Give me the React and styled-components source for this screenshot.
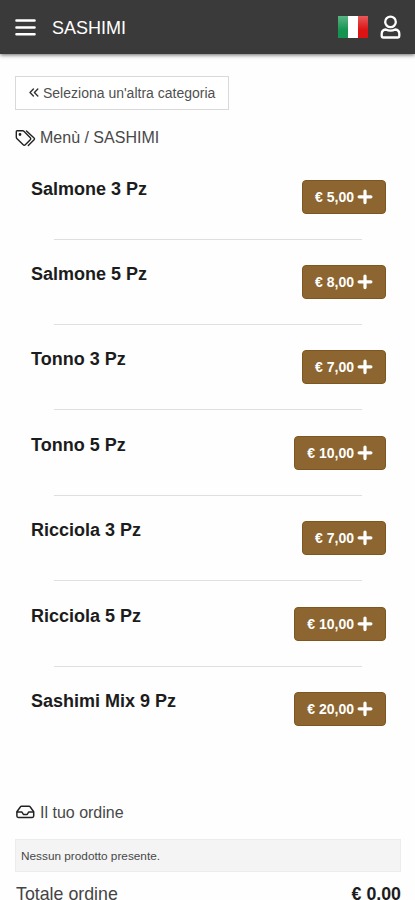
import React from "react";
import styled, { createGlobalStyle } from "styled-components";

const GlobalStyle = createGlobalStyle`
  * { box-sizing: border-box; }
  html, body { margin: 0; padding: 0; height: 100%; overflow: hidden; }
  body { background: #fefefe; color: #444; font-family: "Liberation Sans", Arial, sans-serif; }
`;

const Page = styled.div`
  height: 900px;
  overflow: hidden;
`;

const Header = styled.header`
  display: flex;
  align-items: center;
  height: 54px;
  padding: 0 14px 0 15px;
  background: #3a3a3a;
  color: #fff;
  box-shadow: 0 1px 4px rgba(0, 0, 0, 0.6);
`;

const HeaderTitle = styled.h1`
  flex: 1;
  margin: 2px 0 0 16px;
  font-size: 18px;
  line-height: 22px;
  font-weight: 400;
`;

const Flag = styled.div`
  width: 30px;
  height: 22px;
  margin-right: 12px;
  background:
    linear-gradient(to bottom, rgba(255, 255, 255, 0.3), rgba(255, 255, 255, 0) 65%),
    linear-gradient(to right, #149450 0 33.3%, #fff 33.3% 67%, #dd1212 67%);
`;

const Icon = styled.svg`
  display: block;
  flex: none;
  fill: none;
  stroke: currentColor;
  stroke-linejoin: round;
  stroke-linecap: round;
`;

const Main = styled.main`
  padding: 22px 14px 0 15px;
`;

const BackButton = styled.button`
  display: flex;
  align-items: center;
  gap: 4px;
  width: 214px;
  height: 34px;
  padding: 0 0 0 13px;
  border: 1px solid #d9d9d9;
  background: #fff;
  color: #505050;
  font: 14px/20px "Liberation Sans", Arial, sans-serif;
  white-space: nowrap;

  svg { color: #333; }
`;

const SectionTitle = styled.h2`
  display: flex;
  align-items: center;
  gap: 4px;
  height: 22px;
  margin: ${(p) => p.$top}px 0 0;
  font-size: 16px;
  font-weight: 400;
  color: #484848;

  svg { color: #222; }
`;

const Menu = styled.ul`
  list-style: none;
  margin: 30.6px 0 0;
  padding: 0 15px 0 16px;
`;

const Dish = styled.li`
  display: grid;
  grid-template-columns: 1fr auto;
  grid-template-rows: 59px 1px;
  height: 85.4px;
  align-items: start;
`;

const DishName = styled.h3`
  margin: -1px 0 0;
  font-size: 18px;
  line-height: 20px;
  font-weight: 700;
  color: #1c1c1c;
`;

const AddButton = styled.button`
  display: flex;
  align-items: center;
  gap: 3px;
  height: 34px;
  padding: 0 12px;
  border: 1px solid #7d571f;
  border-radius: 4px;
  background: #8c6530;
  color: #fff;
  font: 700 14px/20px "Liberation Sans", Arial, sans-serif;
`;

const Divider = styled.hr`
  grid-column: 1 / -1;
  width: 308px;
  height: 1px;
  margin: 0 0 0 23px;
  border: 0;
  background: #dfdfdf;
`;

const EmptyNotice = styled.p`
  height: 33px;
  margin: 15px 0 0;
  padding: 0 5px;
  border: 1px solid #ececec;
  background: #f4f4f4;
  color: #484848;
  font-size: 11.8px;
  line-height: 33px;
`;

const Total = styled.div`
  display: flex;
  justify-content: space-between;
  margin-top: 11px;
  padding-left: 1px;
  font-size: 17.8px;
  line-height: 22px;
  color: #444;

  strong { color: #1c1c1c; }
`;

const dishes = [
  ["Salmone 3 Pz", "€ 5,00"],
  ["Salmone 5 Pz", "€ 8,00"],
  ["Tonno 3 Pz", "€ 7,00"],
  ["Tonno 5 Pz", "€ 10,00"],
  ["Ricciola 3 Pz", "€ 7,00"],
  ["Ricciola 5 Pz", "€ 10,00"],
  ["Sashimi Mix 9 Pz", "€ 20,00"],
];

const BarsIcon = () => (
  <Icon width="21" height="20" viewBox="0 0 21 20" strokeWidth="2.6">
    <path d="M1.5 3.500h18M1.5 10.500h18M1.5 17.200h18" />
  </Icon>
);

const UserIcon = () => (
  <Icon width="21" height="24" viewBox="0 0 21 24" strokeWidth="2.3">
    <circle cx="10.5" cy="6.900" r="5.300" />
    <path d="M5.800 14.500c1.500.8 2.700 1.200 4.700 1.200s3.200-.4 4.700-1.200c2.500.3 4.100 2 4.100 4.300v2c0 1-.8 1.700-1.700 1.700H3.400c-1 0-1.700-.7-1.700-1.700v-2c0-2.300 1.600-4 4.100-4.300z" />
  </Icon>
);

const BackIcon = () => (
  <Icon width="10" height="10" viewBox="0 0 10 10" strokeWidth="1.400">
    <path d="M4.400 .900 1 4.500l3.400 3.600M8.800 .900 5.400 4.500l3.400 3.600" />
  </Icon>
);

const TagsIcon = () => (
  <Icon width="21" height="18" viewBox="0 0 21 18" strokeWidth="1.4">
    <path d="M1.300 2.600v5.700c0 .4.2.8.5 1.100l6.400 6.400c.6.6 1.500.6 2.100 0l5-5c.6-.6.6-1.500 0-2.100L8.900 2.300c-.3-.3-.7-.5-1.100-.5H2.100c-.5 0-.8.3-.8.8z" />
    <path d="m11.500 1.900 7.600 7.100c.5.500.5 1.200 0 1.700l-5.800 5.700" />
    <circle cx="5" cy="5.500" r=".7" fill="currentColor" />
  </Icon>
);

const InboxIcon = () => (
  <Icon width="21" height="16" viewBox="-0.500 0 21 16" strokeWidth="1.500">
    <path d="m5 1.700-3.600 5v4.300c0 .8.6 1.400 1.400 1.400h14c.8 0 1.400-.6 1.400-1.400V6.700l-3.600-5c-.2-.3-.6-.5-1-.5H6c-.4 0-.8.200-1 .5z" />
    <path d="M1.800 6.900h4.500l1.600 2.500h3.800l1.600-2.500h4.500" />
  </Icon>
);

const PlusIcon = () => (
  <Icon width="16" height="16" viewBox="0 0 16 16" strokeWidth="3.200">
    <path d="M8 2v11.600M2.100 7.800h11.800" />
  </Icon>
);

export default function App() {
  return (
    <Page>
      <GlobalStyle />
      <Header>
        <BarsIcon />
        <HeaderTitle>SASHIMI</HeaderTitle>
        <Flag />
        <UserIcon />
      </Header>
      <Main>
        <BackButton><BackIcon />Seleziona un'altra categoria</BackButton>
        <SectionTitle $top={17}><TagsIcon />Menù / SASHIMI</SectionTitle>
        <Menu>
          {dishes.map(([name, price], i) => (
            <Dish key={name}>
              <DishName>{name}</DishName>
              <AddButton>{price}<PlusIcon /></AddButton>
              {i < dishes.length - 1 && <Divider />}
            </Dish>
          ))}
        </Menu>
        <SectionTitle $top={25}><InboxIcon />Il tuo ordine</SectionTitle>
        <EmptyNotice>Nessun prodotto presente.</EmptyNotice>
        <Total><span>Totale ordine</span><strong>€ 0,00</strong></Total>
      </Main>
    </Page>
  );
}
